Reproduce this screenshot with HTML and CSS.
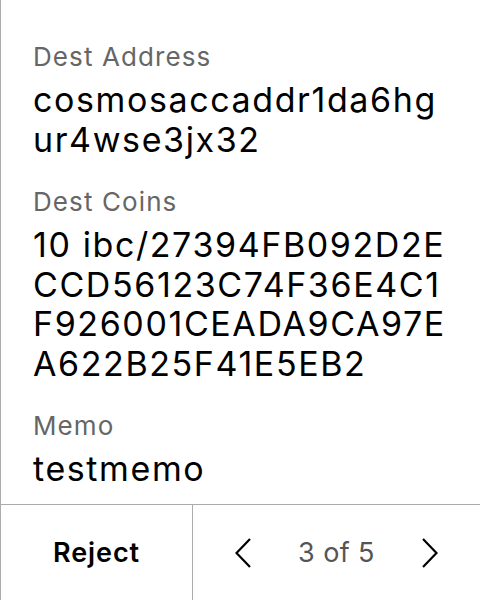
FILE: index.html
```html
<!DOCTYPE html>
<html lang="en">
<head>
<meta charset="utf-8">
<title>Transaction</title>
<link rel="stylesheet" href="styles.css">
</head>
<body>
<div class="screen">
  <div class="content">
    <div class="field">
      <div class="label">Dest Address</div>
      <div class="value">cosmosaccaddr1da6hgur4wse3jx32</div>
    </div>
    <div class="field">
      <div class="label">Dest Coins</div>
      <div class="value">10 ibc/27394FB092D2ECCD56123C74F36E4C1F926001CEADA9CA97EA622B25F41E5EB2</div>
    </div>
    <div class="field">
      <div class="label">Memo</div>
      <div class="value">testmemo</div>
    </div>
  </div>
  <div class="footer">
    <div class="reject">Reject</div>
    <div class="pager">
      <svg class="chev" width="16" height="30" viewBox="0 0 16 30"><path d="M15 1 L1.5 15 L15 29" fill="none" stroke="#000" stroke-width="2.2"/></svg>
      <span class="count">3 of 5</span>
      <svg class="chev" width="16" height="30" viewBox="0 0 16 30"><path d="M1 1 L14.5 15 L1 29" fill="none" stroke="#000" stroke-width="2.2"/></svg>
    </div>
  </div>
</div>
</body>
</html>
```
FILE: styles.css
```css
html, body {
  margin: 0;
  padding: 0;
  background: #fff;
}
body {
  font-family: Inter, "Noto Sans", sans-serif;
  color: #000;
}
.screen {
  width: 479px;
  height: 600px;
  border-left: 1px solid #ababab;
  display: flex;
  flex-direction: column;
  overflow: hidden;
}
.content {
  flex: 1;
  padding: 42px 28px 0 32px;
  display: flex;
  flex-direction: column;
  gap: 28px;
}
.field {
  display: flex;
  flex-direction: column;
  gap: 8px;
}
.label {
  font-size: 26px;
  line-height: 30px;
  letter-spacing: 1.1px;
  color: #666;
}
.value {
  font-size: 34px;
  line-height: 39.5px;
  letter-spacing: 1.6px;
  word-break: break-all;
}
.footer {
  height: 95px;
  border-top: 1px solid #ababab;
  display: flex;
}
.reject {
  width: 191px;
  border-right: 1px solid #ababab;
  display: flex;
  align-items: center;
  justify-content: center;
  font-size: 27px;
  font-weight: 600;
  letter-spacing: 0.9px;
}
.pager {
  flex: 1;
  display: flex;
  align-items: center;
  justify-content: center;
  gap: 47px;
}
.count {
  font-size: 27px;
  letter-spacing: 0.4px;
  color: #555;
}
.chev {
  display: block;
}
```
